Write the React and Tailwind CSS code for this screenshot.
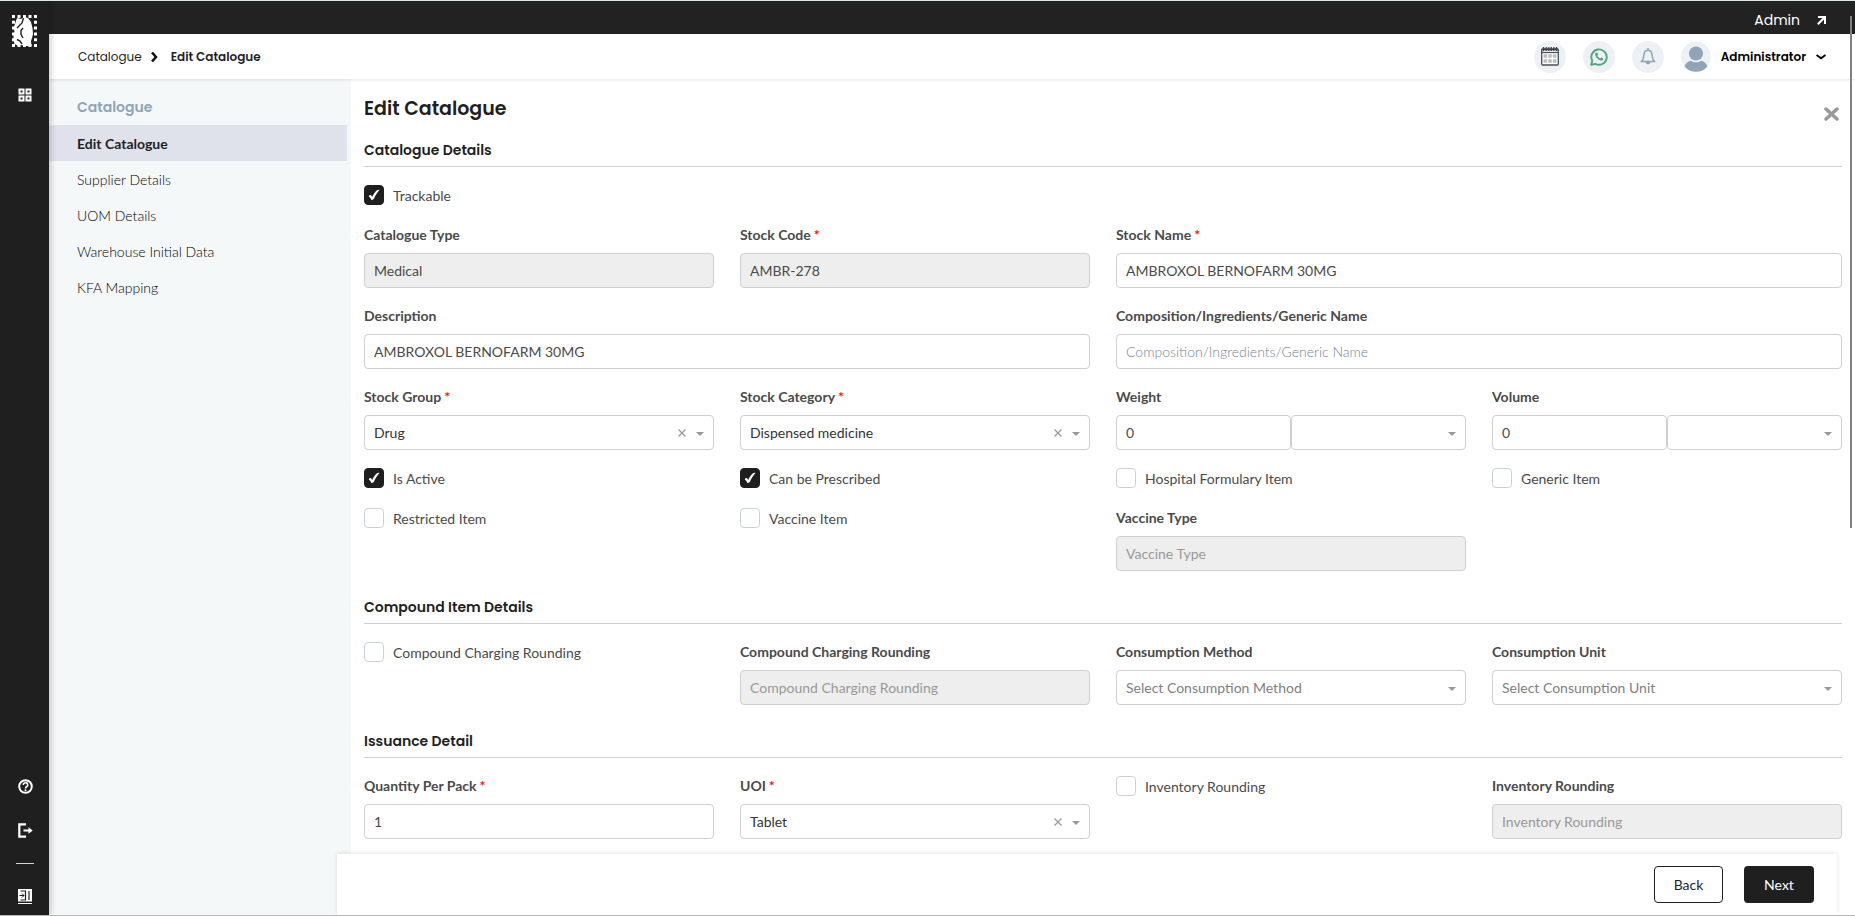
import { useState } from 'react';

const poppins = "font-['Poppins','Inter',sans-serif]";

const SIDE_LINKS = ['Edit Catalogue', 'Supplier Details', 'UOM Details', 'Warehouse Initial Data', 'KFA Mapping'];

const inputStyle =
  'h-[35px] w-full rounded border border-[#d0d0d0] px-[9px] text-sm outline-none focus:border-gray-500 disabled:bg-[#eeeeee]';

const HorseLogo = () => (
  <svg width="25" height="32" viewBox="0 0 25 32" aria-hidden="true">
    <path
      d="M0 1.5h25M0 30.5h25"
      stroke="#fff"
      strokeWidth="3"
      strokeDasharray="3 2.5"
    />
    <path
      d="M1.5 0v32M23.5 0v32"
      stroke="#fff"
      strokeWidth="3"
      strokeDasharray="3 2.8"
    />
    <path
      d="M5 3l4 1 3-2 4 1 3 4 1.500 6 .5 6-1 4-1 3 .5 5h-7l-3-1-3 1-4-2-1-4v-4l1-4-1-4 1.500-4 1-3z"
      fill="#fff"
    />
    <path d="M11.5 3L10 8l-5 5M11 13l-2 2.500v4L11 23M5 24.500l3 1.500 2 3" fill="none" stroke="#1f1f1f" strokeWidth="1.400" />
  </svg>
);

const GridIcon = () => (
  <svg width="14" height="14" viewBox="0 0 14 14" fill="none" stroke="#fff" strokeWidth="2" aria-hidden="true">
    <rect x="1.5" y="1.5" width="4" height="4" />
    <rect x="8.5" y="1.5" width="4" height="4" />
    <rect x="1.5" y="8.5" width="4" height="4" />
    <rect x="8.5" y="8.5" width="4" height="4" />
  </svg>
);

const HelpIcon = () => (
  <svg width="16" height="15" viewBox="-1 0 16 15" fill="none" stroke="#fff" strokeWidth="2" aria-hidden="true">
    <circle cx="7.5" cy="7.5" r="6.3" />
    <path d="M5.3 6a2.2 2.2 0 1 1 3.3 1.8c-.8.5-1.1.8-1.1 1.6" strokeWidth="1.6" />
    <circle cx="7.5" cy="11.2" r="1" fill="#fff" stroke="none" />
  </svg>
);

const LogoutIcon = () => (
  <svg width="16" height="15" viewBox="-1 0 16 15" fill="none" stroke="#fff" strokeWidth="2.2" aria-hidden="true">
    <path d="M8 1.3H1.3v12.4H8M5.5 7.5H12" />
    <path d="M10.5 4.2l4.2 3.3-4.2 3.3z" fill="#fff" stroke="none" />
  </svg>
);

const PanelIcon = () => (
  <svg width="14" height="15" viewBox="0 0 14 15" fill="none" stroke="#fff" strokeWidth="1" aria-hidden="true">
    <path d="M0 0h14v12.5H0z" fill="#fff" stroke="none" />
    <path d="M2.5 2h5v9h-5M11 2v9" stroke="#1f1f1f" strokeWidth="1.2" />
    <path d="M1.5 6.5H6M4 4.5l2 2-2 2" stroke="#1f1f1f" strokeWidth="1" />
    <path d="M0 14.5h14" />
  </svg>
);

const CalendarIcon = () => (
  <svg width="18" height="19" viewBox="0 0 18 19" aria-hidden="true">
    <rect x=".7" y="2" width="16.6" height="16" rx="1" fill="#fff" stroke="#4a4f57" strokeWidth="1.3" />
    <path d="M1 5.5h16" stroke="#4a4f57" strokeWidth="1.3" />
    <path d="M1 2.5h16" stroke="#3f434a" strokeWidth="1.6" />
    <path d="M2.5 0v4M5.2 0v4M7.8 0v4M10.3 0v4M12.9 0v4M15.5 0v4" stroke="#3f434a" strokeWidth="1.3" />
    <path d="M2.5 9h3.6M7.2 9h3.6M11.9 9h3.6M2.5 14h3.6M7.2 14h3.6M11.9 14h3.6" stroke="#bdbdbd" strokeWidth="3.6" />
  </svg>
);

const WhatsappIcon = () => (
  <svg width="18" height="18" viewBox="0 0 18 18" fill="none" aria-hidden="true">
    <path d="M1.2 16.8l1.1-4A7.7 7.7 0 1 1 5.3 15.8z" stroke="#4fa87a" strokeWidth="1.9" strokeLinejoin="round" />
    <path
      d="M6.2 4.6c-.9.6-1.2 1.5-.9 2.6.9 2.7 2.6 4.4 5.3 5.3 1 .3 2.1-.1 2.5-1.1l.1-.9-2.1-1.1-.9 1c-1.3-.5-2.2-1.3-2.8-2.6l.8-.9-.9-2.2z"
      fill="#4fa87a"
    />
  </svg>
);

const BellIcon = () => (
  <svg width="16" height="17" viewBox="0 0 16 17" fill="none" stroke="#90a4b5" strokeWidth="1.5" strokeLinejoin="round" aria-hidden="true">
    <path d="M8 0v2.3M1.2 13.5h13.6c-1.6-1-2.3-2.7-2.6-6-.3-3-1.9-5.2-4.2-5.2S4.1 4.5 3.8 7.5c-.3 3.3-1 5-2.6 6z" />
    <path d="M6.5 14.5a1.6 1.6 0 0 0 3 0z" fill="#90a4b5" />
  </svg>
);

const AvatarIcon = () => (
  <svg width="30" height="31" viewBox="0 0 30 31" aria-hidden="true">
    <circle cx="15" cy="15.5" r="15" fill="#edf1f5" />
    <circle cx="15" cy="12.5" r="7" fill="#90a4b5" />
    <path d="M3.5 25.5C5 21.5 8 20 10 19.8c3 2 7 2 10 0 2 .2 5 1.700 6.500 5.700A15 15 0 0 1 3.500 25.500z" fill="#90a4b5" />
  </svg>
);

const Checkbox = ({ id, label, checked = false }) => {
  const [on, setOn] = useState(checked);
  return (
    <div className="flex min-h-[22px] items-start gap-[9px]">
      <span className="relative flex">
        <input
          id={id}
          type="checkbox"
          checked={on}
          onChange={(e) => setOn(e.target.checked)}
          className="size-5 appearance-none rounded border border-[#c8d1dc] bg-white checked:border-[#1f1f1f] checked:bg-[#1f1f1f]"
        />
        {on && (
          <svg className="pointer-events-none absolute inset-0" width="20" height="20" viewBox="0 0 20 20" aria-hidden="true">
            <path d="M4.800 11.500c.5-1.500 2-2 2.900-.5l.6 1C9.500 9 11.300 6.500 13.300 5l2.300-.3C13 7.800 11.300 10.500 9.800 14l-2.300 1.200c-.7-1.600-1.500-2.700-2.700-3.700z" fill="#fff" />
          </svg>
        )}
      </span>
      <label htmlFor={id} className="text-sm leading-[21px] text-[#4a4a4a]">{label}</label>
    </div>
  );
};

const Field = ({ id, label, required, wide, children }) => (
  <div className={wide ? 'col-span-2' : ''}>
    <label htmlFor={id} className="mb-2 block text-sm leading-5 font-bold text-[#4a4a4a]">
      {label}
      {required && <span className="ml-[3px] text-[#ff1010]">*</span>}
    </label>
    {children}
  </div>
);

const TextField = ({ id, value = '', placeholder, disabled, light, ...rest }) => (
  <Field id={id} {...rest}>
    <input
      id={id}
      type="text"
      defaultValue={value}
      placeholder={placeholder}
      disabled={disabled}
      className={`${inputStyle} text-[#4a4a4a] ${light ? 'placeholder:font-light placeholder:text-[#6f8598]' : 'placeholder:text-[#999999]'}`}
    />
  </Field>
);

const Select = ({ id, value = '', placeholder = '', clearable, ariaLabel }) => (
  <div className="relative w-full">
    <select
      id={id}
      aria-label={ariaLabel}
      defaultValue={value}
      className={`${inputStyle} appearance-none bg-white ${value ? 'text-[#333333]' : 'text-[#808080]'}`}
    >
      <option value="">{placeholder}</option>
      {value && <option value={value}>{value}</option>}
    </select>
    {clearable && (
      <button type="button" aria-label="Clear" className="absolute top-0 right-[28px] flex h-full items-center">
        <svg width="8" height="8" viewBox="0 0 8 8" stroke="#999" strokeWidth="1.3">
          <path d="M.5.5l7 7M7.5.5l-7 7" />
        </svg>
      </button>
    )}
    <svg className="pointer-events-none absolute top-[17px] right-[10px]" width="8" height="4" viewBox="0 0 8 4" aria-hidden="true">
      <path d="M0 0h8L4 4z" fill="#999" />
    </svg>
  </div>
);

const SelectField = ({ id, label, required, ...rest }) => (
  <Field id={id} label={label} required={required}>
    <Select id={id} {...rest} />
  </Field>
);

const AmountField = ({ id, label }) => (
  <Field id={id} label={label}>
    <div className="grid grid-cols-2">
      <input id={id} type="text" defaultValue="0" className={`${inputStyle} text-[#4a4a4a]`} />
      <Select ariaLabel={`${label} unit`} />
    </div>
  </Field>
);

const Section = ({ title, children }) => (
  <section>
    <h2 className={`${poppins} mb-[18px] border-b border-[#d0d0d0] pb-[5px] text-sm leading-[21px] font-semibold text-[#1f1f1f]`}>
      {title}
    </h2>
    <div className="grid grid-cols-4 gap-x-[26px] gap-y-[18px]">{children}</div>
  </section>
);

const IconRail = () => (
  <nav className="z-20 flex w-[49px] shrink-0 flex-col items-center bg-[#1f1f1f] pt-[14px] pb-[11px] shadow-[2px_0_6px_rgba(0,0,0,0.2)]">
    <a href="#home" aria-label="Home"><HorseLogo /></a>
    <a href="#dashboard" aria-label="Dashboard" className="mt-[41px]"><GridIcon /></a>
    <a href="#help" aria-label="Help" className="mt-auto"><HelpIcon /></a>
    <a href="#logout" aria-label="Log out" className="mt-[29px]"><LogoutIcon /></a>
    <span className="mt-[25px] h-px w-[18px] bg-white/80" />
    <a href="#panel" aria-label="Expand menu" className="mt-[25px]"><PanelIcon /></a>
  </nav>
);

const Header = () => (
  <header className={`${poppins} z-10 flex h-[45px] shrink-0 items-center justify-between bg-white pr-[29px] pl-[29px] text-xs shadow-[0_1px_3px_rgba(0,0,0,0.1)]`}>
    <div className="flex items-center">
      <a href="#catalogue" className="text-[#1f1f1f]">Catalogue</a>
      <svg className="mr-[13px] ml-[9px]" width="7" height="10" viewBox="0 0 7 10" fill="none" stroke="#111" strokeWidth="2.5" aria-hidden="true">
        <path d="M1 .5L5 5 1 9.5" />
      </svg>
      <span className="font-semibold text-[#1f1f2a]">Edit Catalogue</span>
    </div>
    <div className="flex items-center gap-[17px]">
      <button type="button" aria-label="Calendar" className="flex size-8 items-center justify-center rounded-full bg-[#edf1f6]"><CalendarIcon /></button>
      <button type="button" aria-label="WhatsApp" className="flex size-8 items-center justify-center rounded-full bg-[#edf1f6]"><WhatsappIcon /></button>
      <button type="button" aria-label="Notifications" className="flex size-8 items-center justify-center rounded-full bg-[#edf1f6]"><BellIcon /></button>
      <button type="button" className="flex items-center gap-[10px] font-semibold text-black">
        <AvatarIcon />
        Administrator
        <svg width="10" height="6" viewBox="0 0 10 6" fill="none" stroke="#000" strokeWidth="2" aria-hidden="true">
          <path d="M.5 1L5 4.200 9.500 1" />
        </svg>
      </button>
    </div>
  </header>
);

const SidePanel = () => (
  <aside className="w-[302px] shrink-0 bg-[#f4f8f9] pt-[17px]">
    <h2 className={`${poppins} mb-[7px] pl-[28px] text-sm leading-[22px] font-semibold text-[#90a4b5]`}>Catalogue</h2>
    <ul>
      {SIDE_LINKS.map((link, i) => (
        <li key={link}>
          <a
            href="#step"
            className={`mr-1 block pt-[2px] pl-[28px] text-sm leading-[34px] ${i === 0 ? 'bg-[#dfe2eb] font-bold text-[#1f1f1f]' : 'font-light text-black'}`}
          >
            {link}
          </a>
        </li>
      ))}
    </ul>
  </aside>
);

const CatalogueForm = () => (
  <form className="flex flex-col gap-[26px]">
    <Section title="Catalogue Details">
      <div className="col-span-4">
        <Checkbox id="trackable" label="Trackable" checked />
      </div>
      <TextField id="type" label="Catalogue Type" value="Medical" disabled />
      <TextField id="code" label="Stock Code" value="AMBR-278" required disabled />
      <TextField id="name" label="Stock Name" value="AMBROXOL BERNOFARM 30MG" required wide />
      <TextField id="description" label="Description" value="AMBROXOL BERNOFARM 30MG" wide />
      <TextField id="composition" label="Composition/Ingredients/Generic Name" placeholder="Composition/Ingredients/Generic Name" wide light />
      <SelectField id="group" label="Stock Group" value="Drug" required clearable />
      <SelectField id="category" label="Stock Category" value="Dispensed medicine" required clearable />
      <AmountField id="weight" label="Weight" />
      <AmountField id="volume" label="Volume" />
      <Checkbox id="active" label="Is Active" checked />
      <Checkbox id="prescribed" label="Can be Prescribed" checked />
      <Checkbox id="formulary" label="Hospital Formulary Item" />
      <Checkbox id="generic" label="Generic Item" />
      <Checkbox id="restricted" label="Restricted Item" />
      <Checkbox id="vaccine" label="Vaccine Item" />
      <TextField id="vaccineType" label="Vaccine Type" placeholder="Vaccine Type" disabled />
    </Section>
    <Section title="Compound Item Details">
      <Checkbox id="compound" label="Compound Charging Rounding" />
      <TextField id="compoundRounding" label="Compound Charging Rounding" placeholder="Compound Charging Rounding" disabled />
      <SelectField id="method" label="Consumption Method" placeholder="Select Consumption Method" />
      <SelectField id="unit" label="Consumption Unit" placeholder="Select Consumption Unit" />
    </Section>
    <Section title="Issuance Detail">
      <TextField id="quantity" label="Quantity Per Pack" value="1" required />
      <SelectField id="uoi" label="UOI" value="Tablet" required clearable />
      <Checkbox id="inventory" label="Inventory Rounding" />
      <TextField id="inventoryRounding" label="Inventory Rounding" placeholder="Inventory Rounding" disabled />
    </Section>
  </form>
);

const App = () => {
  return (
    <div className="relative flex h-screen overflow-hidden border-t border-b border-t-[#dfe5e2] border-b-[#b8b8b8] bg-white font-['Lato',sans-serif]">
      <IconRail />
      <div className="flex min-w-0 flex-1 flex-col">
        <div className={`${poppins} flex h-[33px] shrink-0 items-center justify-end gap-[17px] bg-[#222222] pt-[5px] pr-[29px] text-sm text-white`}>
          <span>Admin</span>
          <svg width="9" height="9" viewBox="0 0 9 9" fill="none" stroke="#fff" strokeWidth="2" aria-hidden="true">
            <path d="M1 1h7v7M8 1L.8 8.2" />
          </svg>
        </div>
        <Header />
        <div className="flex min-h-0 flex-1">
          <SidePanel />
          <div className="flex min-w-0 flex-1 flex-col">
            <main className="min-h-0 flex-1 overflow-hidden px-[13px] pt-[16px]">
              <div className="mb-[17px] flex justify-between">
                <h1 className={`${poppins} text-[19px] leading-[28px] font-semibold text-[#1f1f1f]`}>Edit Catalogue</h1>
                <button type="button" aria-label="Close" className="mt-[12px] mr-[3px] self-start">
                  <svg width="15" height="14" viewBox="0 0 15 14" stroke="#999" strokeWidth="3.5" strokeLinecap="round" aria-hidden="true">
                    <path d="M2 2l11 10M13 2L2 12" />
                  </svg>
                </button>
              </div>
              <CatalogueForm />
            </main>
            <footer className="z-10 mr-[18px] -ml-[14px] flex h-[61px] shrink-0 items-start justify-end gap-[21px] bg-white pt-[12px] pr-[23px] text-sm shadow-[0_-1px_4px_rgba(0,0,0,0.1)]">
              <button type="button" className="h-[37px] w-[69px] rounded border border-[#1f1f1f] text-[#1f1f1f]">Back</button>
              <button type="button" className="h-[37px] w-[70px] rounded bg-[#1f1f1f] text-white">Next</button>
            </footer>
          </div>
        </div>
      </div>
      {/* page scroll thumb */}
      <span className="absolute top-[15px] right-[3px] z-30 h-[56%] w-[2px] bg-[#808080]" />
    </div>
  );
};

export default App;
